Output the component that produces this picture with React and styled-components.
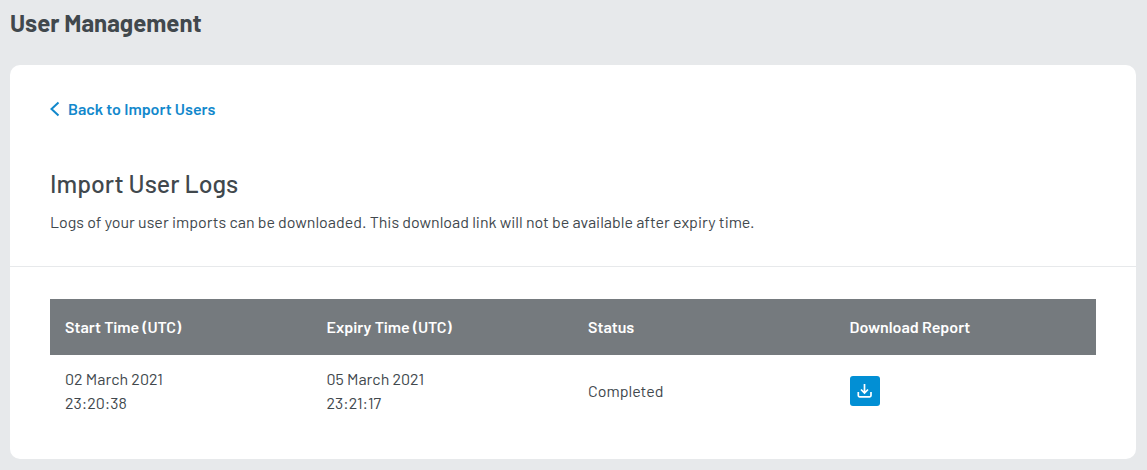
import React from "react";
import styled, { createGlobalStyle } from "styled-components";

const GlobalStyle = createGlobalStyle`
  * { box-sizing: border-box; }
  body {
    margin: 0;
    background: #e7e9eb;
    color: #41484d;
    font-family: Barlow, Roboto, "Liberation Sans", sans-serif;
    font-size: 16px;
    line-height: 24px;
  }
`;

const Page = styled.main`
  padding: 7px 11px 11px 10px;
`;

const PageTitle = styled.h1`
  margin: 0 0 26px;
  font-size: 24px;
  font-weight: 700;
  line-height: 32px;
`;

const Card = styled.section`
  background: #fff;
  border-radius: 10px;
`;

const CardHeader = styled.header`
  padding: 32px 40px;
  border-bottom: 1px solid #e7e9eb;
`;

const BackLink = styled.a`
  display: flex;
  align-items: center;
  gap: 8px;
  width: fit-content;
  color: #1288cc;
  font-weight: 600;
  text-decoration: none;
`;

const SectionTitle = styled.h2`
  margin: 46px 0 11px;
  font-size: 25px;
  font-weight: 500;
  line-height: 32px;
`;

const Description = styled.p`
  margin: 0;
`;

const CardBody = styled.div`
  padding: 32px 40px;
`;

const LogTable = styled.table`
  width: 100%;
  table-layout: fixed;
  border-collapse: collapse;
  text-align: left;
`;

const HeadCell = styled.th`
  padding: 16px 15px;
  background: #757a7e;
  color: #fff;
  font-weight: 600;
`;

const Cell = styled.td`
  padding: 12px 15px;
  vertical-align: middle;
`;

const Line = styled.span`
  display: block;
`;

const DownloadButton = styled.button`
  display: flex;
  align-items: center;
  justify-content: center;
  width: 30px;
  height: 30px;
  padding: 0;
  border: 0;
  border-radius: 3px;
  background: #028fd4;
  color: #fff;
  cursor: pointer;
`;

const columns = ["Start Time (UTC)", "Expiry Time (UTC)", "Status", "Download Report"];

const logs = [
  {
    start: ["02 March 2021", "23:20:38"],
    expiry: ["05 March 2021", "23:21:17"],
    status: "Completed",
  },
];

function ChevronLeft() {
  return (
    <svg width="10" height="16" viewBox="0 0 10 16" fill="none" aria-hidden="true">
      <path d="M8.5 1.5 1.5 8l7 6.5" stroke="currentColor" strokeWidth="2" />
    </svg>
  );
}

function DownloadIcon() {
  return (
    <svg width="16" height="16" viewBox="0 0 16 16" fill="none" stroke="currentColor" aria-hidden="true">
      <path d="M7.5 1v9M4 6.5l3.5 3.5L11 6.5" strokeWidth="1.7" />
      <path d="M1.3 9v3.6q0 1.2 1.2 1.2h10.3q1.2 0 1.2-1.2V9" strokeWidth="1.7" />
    </svg>
  );
}

export default function App() {
  return (
    <>
      <GlobalStyle />
      <Page>
        <PageTitle>User Management</PageTitle>
        <Card>
          <CardHeader>
            <BackLink href="#import-users">
              <ChevronLeft />
              Back to Import Users
            </BackLink>
            <SectionTitle>Import User Logs</SectionTitle>
            <Description>
              Logs of your user imports can be downloaded. This download link will not be available after expiry time.
            </Description>
          </CardHeader>
          <CardBody>
            <LogTable>
              <thead>
                <tr>
                  {columns.map((name) => (
                    <HeadCell key={name} scope="col">{name}</HeadCell>
                  ))}
                </tr>
              </thead>
              <tbody>
                {logs.map((log) => (
                  <tr key={log.start.join(" ")}>
                    <Cell>{log.start.map((part) => <Line key={part}>{part}</Line>)}</Cell>
                    <Cell>{log.expiry.map((part) => <Line key={part}>{part}</Line>)}</Cell>
                    <Cell>{log.status}</Cell>
                    <Cell>
                      <DownloadButton type="button" aria-label="Download report">
                        <DownloadIcon />
                      </DownloadButton>
                    </Cell>
                  </tr>
                ))}
              </tbody>
            </LogTable>
          </CardBody>
        </Card>
      </Page>
    </>
  );
}
